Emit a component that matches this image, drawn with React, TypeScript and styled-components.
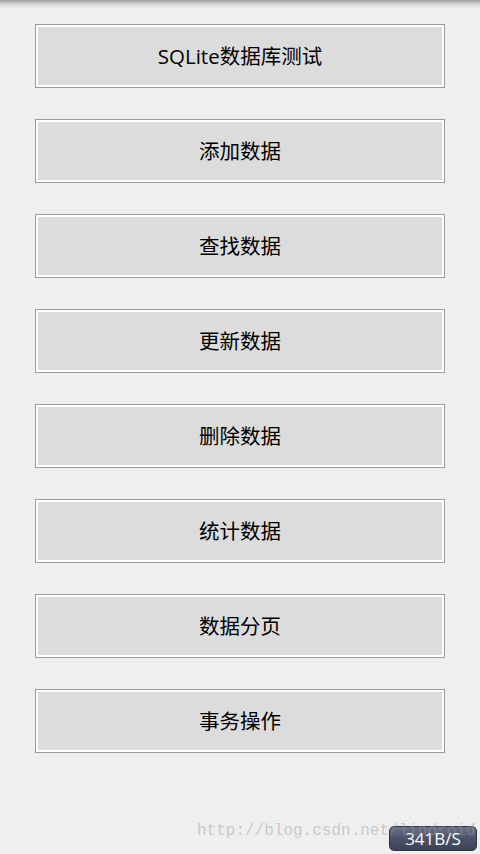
import React from "react";
import styled, { createGlobalStyle } from "styled-components";

const Global = createGlobalStyle`
  html, body { margin: 0; padding: 0; background: #efefef; }
  body { width: 480px; height: 854px; overflow: hidden; }
  #root { width: 480px; height: 854px; }
`;

const Screen = styled.div`
  position: relative;
  width: 480px;
  height: 854px;
  background: #efefef;
  font-family: "Open Sans", "Noto Sans CJK SC", sans-serif;
  overflow: hidden;
`;

const TopShade = styled.div`
  position: absolute;
  top: 0;
  left: 0;
  right: 0;
  height: 8px;
  background: linear-gradient(to bottom, #9c9c9c 0%, #cfcfcf 45%, #efefef 100%);
`;

const List = styled.div`
  display: flex;
  flex-direction: column;
  gap: 31px;
  padding: 24px 35px 0 35px;
`;

const Button = styled.button`
  box-sizing: border-box;
  width: 410px;
  height: 64px;
  margin: 0;
  padding: 0 0 3px 0;
  border: 1px solid #9b9b9b;
  box-shadow: inset 0 0 0 2px #ffffff;
  background: #dcdcdc;
  color: #000;
  font-family: "Open Sans", "Noto Sans CJK SC", sans-serif;
  font-size: 20.5px;
  display: flex;
  align-items: center;
  justify-content: center;
  cursor: pointer;
`;

const Watermark = styled.div`
  position: absolute;
  left: 197px;
  top: 822px;
  font-family: "Liberation Mono", monospace;
  font-size: 16px;
  color: rgba(150, 150, 150, 0.45);
  white-space: nowrap;
  z-index: 2;
`;

const Badge = styled.div`
  position: absolute;
  left: 389px;
  top: 826px;
  width: 88px;
  height: 25px;
  box-sizing: border-box;
  padding-bottom: 1px;
  border-radius: 5px;
  border: 1px solid #2f3444;
  background: linear-gradient(to bottom, #6a7388 0%, #4a5267 50%, #3c4356 100%);
  color: #ffffff;
  font-family: "Open Sans", "Noto Sans", sans-serif;
  font-size: 17px;
  display: flex;
  align-items: center;
  justify-content: center;
  z-index: 1;
`;

const items = [
  "SQLite数据库测试",
  "添加数据",
  "查找数据",
  "更新数据",
  "删除数据",
  "统计数据",
  "数据分页",
  "事务操作",
];

export default function App() {
  return (
    <Screen>
      <Global />
      <TopShade />
      <List>
        {items.map((t) => (
          <Button key={t}>{t}</Button>
        ))}
      </List>
      <Badge>341B/S</Badge>
      <Watermark>http://blog.csdn.net/lindroid</Watermark>
    </Screen>
  );
}
